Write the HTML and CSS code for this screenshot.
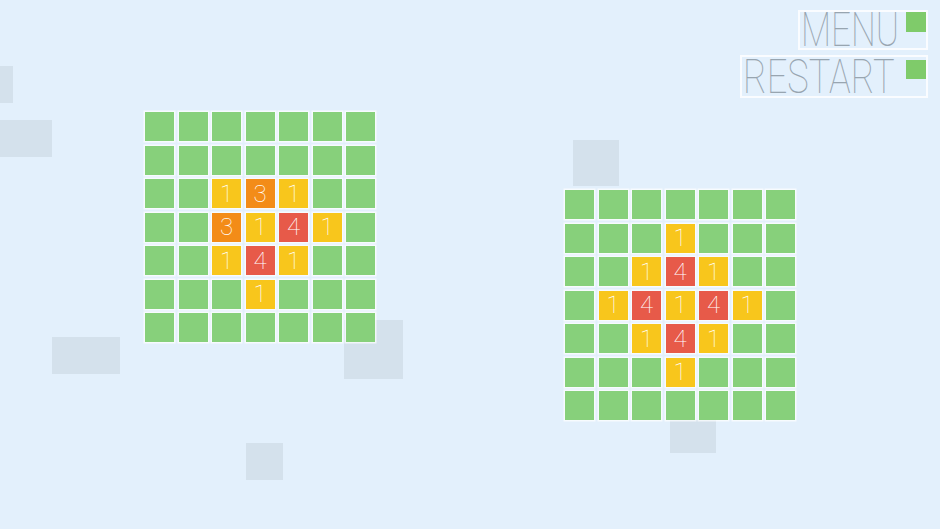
FILE: index.html
```html
<!DOCTYPE html>
<html>
<head>
<meta charset="utf-8">
<link rel="stylesheet" href="styles.css">
</head>
<body>
<div class="stage">
  <div class="bg-sq sq1"></div>
  <div class="bg-sq sq2"></div>
  <div class="bg-sq sq3"></div>
  <div class="bg-sq sq4"></div>
  <div class="bg-sq sq5"></div>
  <div class="bg-sq sq6"></div>
  <div class="bg-sq sq7"></div>

  <div class="board board-left">
    <div class="c g"></div><div class="c g"></div><div class="c g"></div><div class="c g"></div><div class="c g"></div><div class="c g"></div><div class="c g"></div>
    <div class="c g"></div><div class="c g"></div><div class="c g"></div><div class="c g"></div><div class="c g"></div><div class="c g"></div><div class="c g"></div>
    <div class="c g"></div><div class="c g"></div><div class="c y">1</div><div class="c o">3</div><div class="c y">1</div><div class="c g"></div><div class="c g"></div>
    <div class="c g"></div><div class="c g"></div><div class="c o">3</div><div class="c y">1</div><div class="c r">4</div><div class="c y">1</div><div class="c g"></div>
    <div class="c g"></div><div class="c g"></div><div class="c y">1</div><div class="c r">4</div><div class="c y">1</div><div class="c g"></div><div class="c g"></div>
    <div class="c g"></div><div class="c g"></div><div class="c g"></div><div class="c y">1</div><div class="c g"></div><div class="c g"></div><div class="c g"></div>
    <div class="c g"></div><div class="c g"></div><div class="c g"></div><div class="c g"></div><div class="c g"></div><div class="c g"></div><div class="c g"></div>
  </div>

  <div class="board board-right">
    <div class="c g"></div><div class="c g"></div><div class="c g"></div><div class="c g"></div><div class="c g"></div><div class="c g"></div><div class="c g"></div>
    <div class="c g"></div><div class="c g"></div><div class="c g"></div><div class="c y">1</div><div class="c g"></div><div class="c g"></div><div class="c g"></div>
    <div class="c g"></div><div class="c g"></div><div class="c y">1</div><div class="c r">4</div><div class="c y">1</div><div class="c g"></div><div class="c g"></div>
    <div class="c g"></div><div class="c y">1</div><div class="c r">4</div><div class="c y">1</div><div class="c r">4</div><div class="c y">1</div><div class="c g"></div>
    <div class="c g"></div><div class="c g"></div><div class="c y">1</div><div class="c r">4</div><div class="c y">1</div><div class="c g"></div><div class="c g"></div>
    <div class="c g"></div><div class="c g"></div><div class="c g"></div><div class="c y">1</div><div class="c g"></div><div class="c g"></div><div class="c g"></div>
    <div class="c g"></div><div class="c g"></div><div class="c g"></div><div class="c g"></div><div class="c g"></div><div class="c g"></div><div class="c g"></div>
  </div>

  <nav class="menu">
    <div class="btn btn-menu"><span class="label"><span class="txt">MENU</span></span><span class="mark"></span></div>
    <div class="btn btn-restart"><span class="label"><span class="txt">RESTART</span></span><span class="mark"></span></div>
  </nav>
</div>
</body>
</html>
```

FILE: styles.css
```css
html, body {
  margin: 0;
  padding: 0;
  background: #e3f0fc;
}

.stage {
  position: relative;
  width: 940px;
  height: 529px;
  overflow: hidden;
  background: #e3f0fc;
  font-family: Roboto, Inter, "Noto Sans", sans-serif;
}

.bg-sq {
  position: absolute;
  background: #d4e1ec;
}
.sq1 { left: 0;     top: 66px;  width: 13px; height: 37px; }
.sq2 { left: 0;     top: 120px; width: 52px; height: 37px; }
.sq3 { left: 52px;  top: 337px; width: 68px; height: 37px; }
.sq4 { left: 246px; top: 443px; width: 37px; height: 37px; }
.sq5 { left: 344px; top: 320px; width: 59px; height: 59px; }
.sq6 { left: 573px; top: 140px; width: 46px; height: 46px; }
.sq7 { left: 670px; top: 420px; width: 46px; height: 33px; }

.board {
  position: absolute;
  display: grid;
  grid-template-columns: repeat(7, 29px);
  grid-template-rows: repeat(7, 29px);
  gap: 4.5px;
}
.board-left  { left: 145px; top: 112px; }
.board-right { left: 565px; top: 190px; }

.c {
  display: flex;
  align-items: center;
  justify-content: center;
  color: #fff;
  font-size: 24px;
  font-weight: 100;
  line-height: 1;
  box-shadow: 0 0 0 1.5px rgba(255, 255, 255, 0.7);
}
.g { background: #87d07b; }
.y { background: #f8c61c; }
.o { background: #f38c18; }
.r { background: #e75a49; }

.menu {
  position: absolute;
  top: 10px;
  right: 12px;
  display: flex;
  flex-direction: column;
  align-items: flex-end;
  gap: 5px;
}

.btn {
  display: flex;
  justify-content: space-between;
  align-items: flex-start;
  border: 2px solid rgba(255, 255, 255, 0.8);
  box-sizing: border-box;
  color: #98a5b0;
  font-weight: 100;
  font-size: 48px;
}
.btn-menu    { width: 130px; height: 40px; line-height: 36px; }
.btn-restart { width: 188px; height: 43px; line-height: 40px; }

.label {
  display: block;
  white-space: nowrap;
  padding-left: 1px;
}
.btn-menu .label    { width: 100px; }
.btn-restart .label { width: 158px; }

.txt {
  display: inline-block;
  transform-origin: left center;
}
.btn-menu .txt    { transform: scaleX(0.73); }
.btn-restart .txt { transform: scaleX(0.755); }

.mark {
  display: block;
  width: 20px;
  height: 20px;
  background: #7fcb6a;
  flex: none;
}
.btn-restart .mark { margin-top: 3px; height: 19px; }
```
